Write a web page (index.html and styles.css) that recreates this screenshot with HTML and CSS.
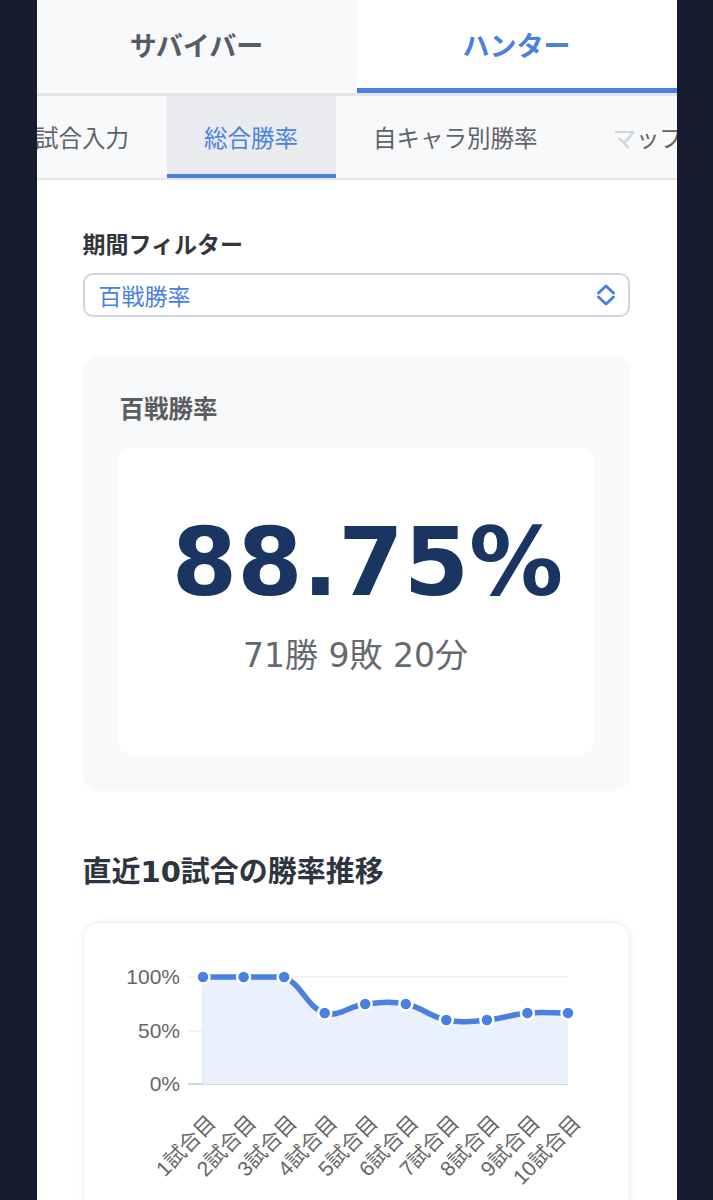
FILE: index.html
```html
<!DOCTYPE html>
<html lang="ja">
<head>
<meta charset="utf-8">
<title>勝率</title>
<link rel="stylesheet" href="styles.css">
</head>
<body>
<div class="app">
  <nav class="main-tabs">
    <div class="main-tab">サバイバー</div>
    <div class="main-tab active">ハンター</div>
  </nav>
  <div class="sub-tabs-wrap">
    <nav class="sub-tabs">
      <div class="sub-tab">試合入力</div>
      <div class="sub-tab active">総合勝率</div>
      <div class="sub-tab">自キャラ別勝率</div>
      <div class="sub-tab"><span class="fade">マ</span>ップ</div>
    </nav>
  </div>
  <main class="content">
    <div class="field-label">期間フィルター</div>
    <div class="select">
      <span class="select-value">百戦勝率</span>
      <svg class="chev" width="20" height="24" viewBox="0 0 20 24">
        <path d="M2.5 10 L10 3 L17.5 10" fill="none" stroke="#4a80e0" stroke-width="3" stroke-linecap="round" stroke-linejoin="round"/>
        <path d="M2.5 14 L10 21 L17.5 14" fill="none" stroke="#4a80e0" stroke-width="3" stroke-linecap="round" stroke-linejoin="round"/>
      </svg>
    </div>
    <section class="stat-card">
      <h2 class="stat-title">百戦勝率</h2>
      <div class="stat-inner">
        <div class="big">88.75%</div>
        <div class="record">71勝 9敗 20分</div>
      </div>
    </section>
    <h2 class="section-title">直近10試合の勝率推移</h2>
    <section class="chart-card">
      <svg class="chart" width="547" height="300" viewBox="0 0 547 300">
        <line x1="105" y1="55" x2="485" y2="55" class="grid"/>
        <line x1="105" y1="109" x2="485" y2="109" class="grid"/>
        <line x1="105" y1="162" x2="485" y2="162" class="axis"/>
        <line x1="120" y1="55" x2="120" y2="162" class="axis-y"/>
        <text x="97" y="62" class="ylab">100%</text>
        <text x="97" y="116" class="ylab">50%</text>
        <text x="97" y="169" class="ylab">0%</text>
        <path class="area" d="M120,55 C136.2,55 144.4,55 160.6,55 C176.8,55 187.2,55 201.1,55 C219.7,63.2 223.3,84.9 241.7,91 C255.8,95.7 265.8,83.8 282.2,82 C298.2,80.2 307.2,78.9 322.8,82 C339.6,85.3 346.5,94.7 363.3,98 C378.9,101.1 387.8,99.4 403.9,98 C420.2,96.6 428.1,92.4 444.4,91 C460.5,89.6 468.8,91 485,91 L485,162 L120,162 Z"/>
        <path class="line" d="M120,55 C136.2,55 144.4,55 160.6,55 C176.8,55 187.2,55 201.1,55 C219.7,63.2 223.3,84.9 241.7,91 C255.8,95.7 265.8,83.8 282.2,82 C298.2,80.2 307.2,78.9 322.8,82 C339.6,85.3 346.5,94.7 363.3,98 C378.9,101.1 387.8,99.4 403.9,98 C420.2,96.6 428.1,92.4 444.4,91 C460.5,89.6 468.8,91 485,91"/>
        <g class="pts">
          <circle cx="120" cy="55" r="6.5"/>
          <circle cx="160.6" cy="55" r="6.5"/>
          <circle cx="201.1" cy="55" r="6.5"/>
          <circle cx="241.7" cy="91" r="6.5"/>
          <circle cx="282.2" cy="82" r="6.5"/>
          <circle cx="322.8" cy="82" r="6.5"/>
          <circle cx="363.3" cy="98" r="6.5"/>
          <circle cx="403.9" cy="98" r="6.5"/>
          <circle cx="444.4" cy="91" r="6.5"/>
          <circle cx="485" cy="91" r="6.5"/>
        </g>
        <g class="xlabs">
          <text transform="translate(134,202) rotate(-46)">1試合目</text>
          <text transform="translate(174.6,202) rotate(-46)">2試合目</text>
          <text transform="translate(215.1,202) rotate(-46)">3試合目</text>
          <text transform="translate(255.7,202) rotate(-46)">4試合目</text>
          <text transform="translate(296.2,202) rotate(-46)">5試合目</text>
          <text transform="translate(336.8,202) rotate(-46)">6試合目</text>
          <text transform="translate(377.3,202) rotate(-46)">7試合目</text>
          <text transform="translate(417.9,202) rotate(-46)">8試合目</text>
          <text transform="translate(458.4,202) rotate(-46)">9試合目</text>
          <text transform="translate(499,202) rotate(-46)">10試合目</text>
        </g>
      </svg>
    </section>
  </main>
</div>
</body>
</html>
```

FILE: styles.css
```css
* { box-sizing: border-box; }
html, body {
  margin: 0;
  padding: 0;
  background: #161b30;
}
body {
  font-family: "DejaVu Sans", "Noto Sans CJK JP", sans-serif;
  color: #333;
}
.app {
  width: 640px;
  margin: 0 auto;
  background: #ffffff;
  min-height: 1200px;
  overflow: hidden;
}
.main-tabs {
  display: flex;
  border-bottom: 3px solid #e3e5e8;
  background: #f8f9fa;
}
.main-tab {
  flex: 1;
  height: 93px;
  display: flex;
  align-items: center;
  justify-content: center;
  font-family: "Noto Sans CJK JP", sans-serif;
  font-weight: 700;
  font-size: 27px;
  color: #575c64;
  padding-bottom: 5px;
}
.main-tab.active {
  background: #ffffff;
  color: #4a80e0;
  border-bottom: 5px solid #4a80e0;
  padding-bottom: 0;
}
.sub-tabs-wrap {
  background: #f8f9fa;
  border-bottom: 2px solid #e3e5e8;
  overflow: hidden;
}
.sub-tabs {
  display: flex;
  margin-left: -39px;
  white-space: nowrap;
}
.sub-tab {
  flex: none;
  height: 82px;
  padding: 4px 37.5px 0;
  display: flex;
  align-items: center;
  font-family: "Noto Sans CJK JP", sans-serif;
  font-size: 23.5px;
  color: #5f6368;
  border-bottom: 4px solid transparent;
}
.sub-tab.active {
  background: #e9ebee;
  color: #4a80e0;
  border-bottom-color: #4a80e0;
}
.fade { color: #cfd2d6; }
.content {
  padding: 48px 47px 0 46px;
}
.field-label {
  font-family: "Noto Sans CJK JP", sans-serif;
  font-weight: 700;
  font-size: 23px;
  line-height: 30px;
  color: #33373d;
}
.select {
  margin-top: 15px;
  height: 44px;
  border: 2px solid #cfd6e0;
  border-radius: 10px;
  display: flex;
  align-items: center;
  justify-content: space-between;
  padding: 0 12px 0 14px;
  background: #fff;
}
.select-value {
  font-family: "Noto Sans CJK JP", sans-serif;
  font-size: 23px;
  line-height: 30px;
  color: #4a80e0;
}
.chev { display: block; }
.stat-card {
  margin-top: 38px;
  background: #f8f9fa;
  border-radius: 16px;
  padding: 38px 36px 36px 35px;
}
.stat-title {
  margin: 0 0 25px 2px;
  font-family: "Noto Sans CJK JP", sans-serif;
  font-weight: 700;
  font-size: 24.5px;
  line-height: 30px;
  color: #5a5e63;
}
.stat-inner {
  background: #ffffff;
  border-radius: 14px;
  padding: 61px 0 79px;
  text-align: center;
}
.big {
  font-family: "DejaVu Sans", sans-serif;
  font-weight: 700;
  font-size: 94px;
  line-height: 107px;
  color: #1a3562;
  padding-left: 24px;
}
.record {
  margin-top: 20px;
  font-size: 33px;
  line-height: 40px;
  color: #666a6f;
}
.section-title {
  margin: 62px 0 31px;
  font-family: "DejaVu Sans", "Noto Sans CJK JP", sans-serif;
  font-weight: 700;
  font-size: 29px;
  line-height: 38px;
  color: #2f3540;
}
.chart-card {
  background: #ffffff;
  border-radius: 16px;
  box-shadow: 0 0 6px rgba(0, 0, 0, 0.06);
  border: 1px solid #f2f3f5;
  height: 320px;
}
.chart { display: block; margin: -1px; }
.grid { stroke: #eef0f3; stroke-width: 1.5; }
.axis { stroke: #d3d7de; stroke-width: 2; }
.axis-y { stroke: #dde1e7; stroke-width: 1.5; }
.ylab {
  font-family: "Liberation Sans", Arial, sans-serif;
  font-size: 21px;
  fill: #666;
  text-anchor: end;
}
.area { fill: #eaf1fc; stroke: none; }
.line { fill: none; stroke: #4a80e0; stroke-width: 5.5; }
.pts circle { fill: #4a80e0; stroke: #ffffff; stroke-width: 2.5; }
.xlabs text {
  font-family: "Liberation Sans", "Noto Sans CJK JP", sans-serif;
  font-size: 21px;
  fill: #666;
  text-anchor: end;
}
```
